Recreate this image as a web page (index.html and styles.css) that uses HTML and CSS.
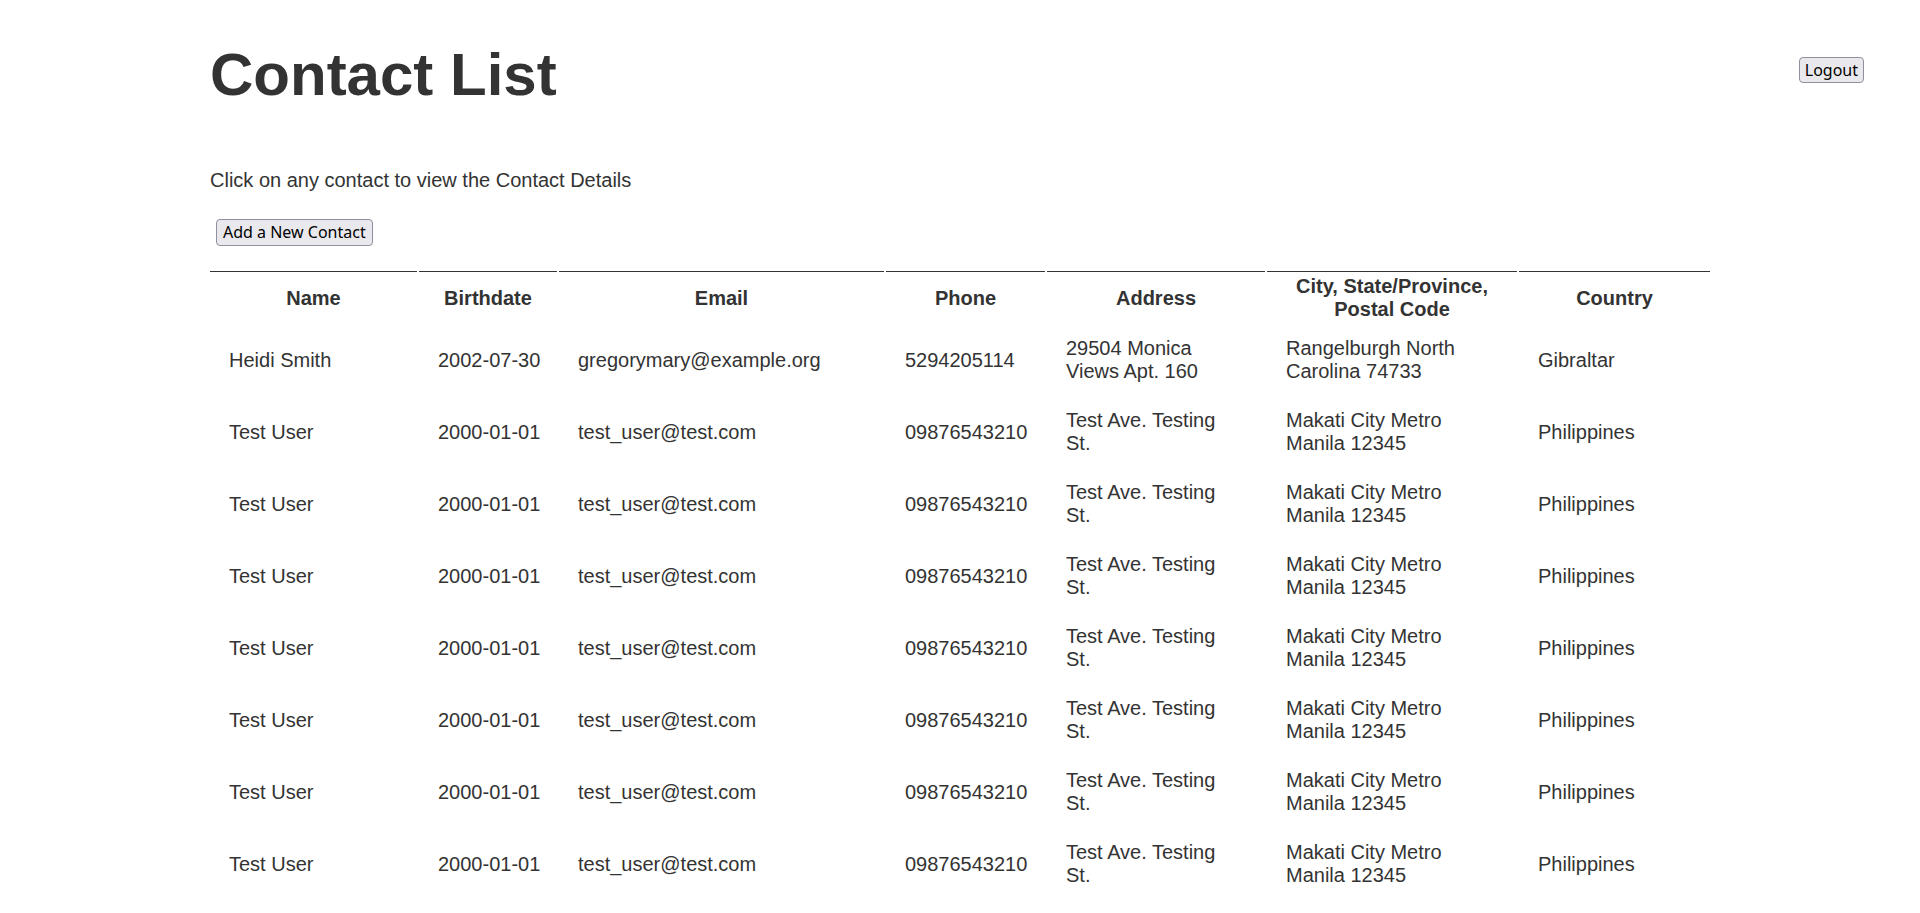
FILE: index.html
```html
<!DOCTYPE html>
<html lang="en">
<head>
<meta charset="utf-8">
<title>Contact List</title>
<link rel="stylesheet" href="styles.css">
</head>
<body>
<header class="topbar">
  <h1 class="title">Contact List</h1>
  <button class="btn btn-logout" type="button">Logout</button>
</header>
<main class="page">
  <p class="hint">Click on any contact to view the Contact Details</p>
  <button class="btn btn-add" type="button">Add a New Contact</button>
  <table class="contacts">
    <colgroup>
      <col class="c-name">
      <col class="c-birth">
      <col class="c-email">
      <col class="c-phone">
      <col class="c-addr">
      <col class="c-city">
      <col class="c-country">
    </colgroup>
    <thead>
      <tr>
        <th>Name</th>
        <th>Birthdate</th>
        <th>Email</th>
        <th>Phone</th>
        <th>Address</th>
        <th>City, State/Province, Postal Code</th>
        <th>Country</th>
      </tr>
    </thead>
    <tbody>
      <tr>
        <td>Heidi Smith</td><td class="nowrap">2002-07-30</td><td>gregorymary@example.org</td><td class="nowrap">5294205114</td><td class="addr">29504 Monica Views Apt. 160</td><td>Rangelburgh North Carolina 74733</td><td>Gibraltar</td>
      </tr>
      <tr>
        <td>Test User</td><td class="nowrap">2000-01-01</td><td>test_user@test.com</td><td class="nowrap">09876543210</td><td class="addr">Test Ave. Testing St.</td><td>Makati City Metro Manila 12345</td><td>Philippines</td>
      </tr>
      <tr>
        <td>Test User</td><td class="nowrap">2000-01-01</td><td>test_user@test.com</td><td class="nowrap">09876543210</td><td class="addr">Test Ave. Testing St.</td><td>Makati City Metro Manila 12345</td><td>Philippines</td>
      </tr>
      <tr>
        <td>Test User</td><td class="nowrap">2000-01-01</td><td>test_user@test.com</td><td class="nowrap">09876543210</td><td class="addr">Test Ave. Testing St.</td><td>Makati City Metro Manila 12345</td><td>Philippines</td>
      </tr>
      <tr>
        <td>Test User</td><td class="nowrap">2000-01-01</td><td>test_user@test.com</td><td class="nowrap">09876543210</td><td class="addr">Test Ave. Testing St.</td><td>Makati City Metro Manila 12345</td><td>Philippines</td>
      </tr>
      <tr>
        <td>Test User</td><td class="nowrap">2000-01-01</td><td>test_user@test.com</td><td class="nowrap">09876543210</td><td class="addr">Test Ave. Testing St.</td><td>Makati City Metro Manila 12345</td><td>Philippines</td>
      </tr>
      <tr>
        <td>Test User</td><td class="nowrap">2000-01-01</td><td>test_user@test.com</td><td class="nowrap">09876543210</td><td class="addr">Test Ave. Testing St.</td><td>Makati City Metro Manila 12345</td><td>Philippines</td>
      </tr>
      <tr>
        <td>Test User</td><td class="nowrap">2000-01-01</td><td>test_user@test.com</td><td class="nowrap">09876543210</td><td class="addr">Test Ave. Testing St.</td><td>Makati City Metro Manila 12345</td><td>Philippines</td>
      </tr>
      <tr>
        <td>Test User</td><td class="nowrap">2000-01-01</td><td>test_user@test.com</td><td class="nowrap">09876543210</td><td class="addr">Test Ave. Testing St.</td><td>Makati City Metro Manila 12345</td><td>Philippines</td>
      </tr>
      <tr>
        <td>Test User</td><td class="nowrap">2000-01-01</td><td>test_user@test.com</td><td class="nowrap">09876543210</td><td class="addr">Test Ave. Testing St.</td><td>Makati City Metro Manila 12345</td><td>Philippines</td>
      </tr>
    </tbody>
  </table>
</main>
</body>
</html>
```

FILE: styles.css
```css
html, body {
  margin: 0;
  padding: 0;
  background: #ffffff;
}

body {
  font-family: "Liberation Sans", Arial, Helvetica, sans-serif;
  font-size: 20px;
  color: #333333;
}

.topbar {
  display: flex;
  align-items: flex-start;
  justify-content: space-between;
  padding: 0 56px 0 210px;
}

.title {
  margin: 40px 0 0;
  font-size: 60px;
  font-weight: bold;
  line-height: 69px;
  color: #333333;
}

.btn {
  display: block;
  font-family: "Noto Sans", "Liberation Sans", sans-serif;
  font-size: 16px;
  color: #000000;
  background: #e9e9ed;
  border: 1px solid #8f8f9d;
  border-radius: 4px;
  padding: 0 6px;
  line-height: 24px;
  margin: 0;
}

.btn-logout {
  margin-top: 57px;
  padding: 0 5px;
}

.page {
  width: 1500px;
  margin: 0 auto;
}

.hint {
  margin: 60px 0 0;
  line-height: 23px;
}

.btn-add {
  margin: 27px 0 0 6px;
  line-height: 25px;
}

.contacts {
  margin: 23px -2px 0;
  width: 1504px;
  table-layout: fixed;
  border-collapse: separate;
  border-spacing: 2px;
}

.c-name { width: 207px; }
.c-birth { width: 138px; }
.c-email { width: 325px; }
.c-phone { width: 159px; }
.c-addr { width: 218px; }
.c-city { width: 250px; }
.c-country { width: 191px; }

.contacts th {
  border-top: 1px solid #333333;
  padding: 3px 2px 2px;
  font-weight: bold;
  text-align: center;
  line-height: 23px;
  vertical-align: middle;
}

.contacts td {
  padding: 12px 19px;
  line-height: 23px;
  text-align: left;
  vertical-align: middle;
}

.contacts td.nowrap {
  white-space: nowrap;
}

.contacts td.addr {
  padding-right: 30px;
}
```
